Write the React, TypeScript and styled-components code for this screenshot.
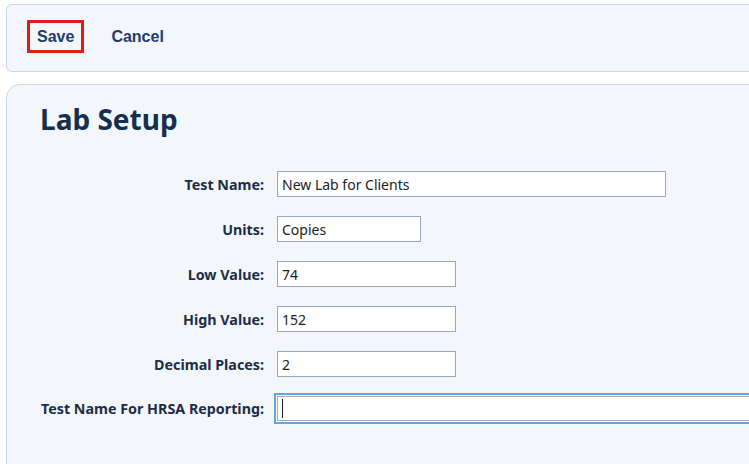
import { Fragment } from "react";
import styled, { createGlobalStyle } from "styled-components";

const GlobalStyle = createGlobalStyle`
  html, body {
    margin: 0;
    padding: 0;
    background: #ffffff;
    overflow: hidden;
  }
  body {
    font-family: "Noto Sans", "Open Sans", sans-serif;
  }
`;

const Page = styled.div`
  width: 749px;
  height: 464px;
  overflow: hidden;
  padding: 4px 0 0 6px;
  box-sizing: border-box;
`;

const Toolbar = styled.div`
  width: 780px;
  height: 68px;
  box-sizing: border-box;
  border: 1px solid #c8d7e7;
  border-radius: 6px;
  background: #f3f7fc;
  display: flex;
  align-items: center;
  gap: 17px;
  padding-left: 20px;
`;

const ToolButton = styled.button<{ $selected?: boolean }>`
  font-family: "Liberation Sans", Arial, sans-serif;
  font-weight: bold;
  font-size: 16px;
  color: #1f3b6e;
  background: transparent;
  border: 3px solid ${(p) => (p.$selected ? "#e41b1b" : "transparent")};
  padding: 5px 7px 5px 7px;
  height: 33px;
  margin-top: -3px;
  cursor: pointer;
`;

const Panel = styled.div`
  margin-top: 12px;
  width: 780px;
  height: 420px;
  box-sizing: border-box;
  border: 1px solid #c8d7e7;
  border-radius: 14px;
  background: #f3f7fc;
  padding: 14px 0 0 33px;
`;

const Title = styled.h1`
  margin: 0;
  font-size: 28px;
  line-height: 40px;
  font-weight: bold;
  color: #15304f;
`;

const Form = styled.div`
  margin-top: 32px;
  display: grid;
  grid-template-columns: 224px auto;
  column-gap: 13px;
  row-gap: 19px;
  align-items: center;
  justify-items: start;
`;

const Label = styled.label`
  justify-self: end;
  font-size: 14.3px;
  font-weight: bold;
  color: #1c2e45;
  white-space: nowrap;
`;

const Field = styled.div`
  position: relative;
`;

const Input = styled.input<{ $width: number; $focused?: boolean }>`
  width: ${(p) => p.$width}px;
  height: 26px;
  box-sizing: border-box;
  border: 1px solid #97a9bf;
  background: #ffffff;
  font-family: "Noto Sans", "Open Sans", sans-serif;
  font-size: 14px;
  color: #222222;
  padding: 0 4px;
  outline: none;
  box-shadow: ${(p) =>
    p.$focused ? "0 0 0 1px #ffffff, 0 0 0 3px #5ea6e8" : "none"};
  ${(p) => (p.$focused ? "border-color: #a6adb5; height: 25px; caret-color: transparent;" : "")}
`;

const Caret = styled.span`
  position: absolute;
  left: 5px;
  top: 3px;
  width: 1px;
  height: 19px;
  background: #1a1a1a;
`;

const rows = [
  { label: "Test Name:", value: "New Lab for Clients", width: 389 },
  { label: "Units:", value: "Copies", width: 144 },
  { label: "Low Value:", value: "74", width: 179 },
  { label: "High Value:", value: "152", width: 179 },
  { label: "Decimal Places:", value: "2", width: 179 },
];

export default function App() {
  return (
    <Page>
      <GlobalStyle />
      <Toolbar>
        <ToolButton $selected>Save</ToolButton>
        <ToolButton>Cancel</ToolButton>
      </Toolbar>
      <Panel>
        <Title>Lab Setup</Title>
        <Form>
          {rows.map((r) => (
            <Fragment key={r.label}>
              <Label>{r.label}</Label>
              <Field>
                <Input $width={r.width} defaultValue={r.value} />
              </Field>
            </Fragment>
          ))}
          <Label>Test Name For HRSA Reporting:</Label>
          <Field>
            <Input $width={520} $focused defaultValue="" />
            <Caret />
          </Field>
        </Form>
      </Panel>
    </Page>
  );
}
